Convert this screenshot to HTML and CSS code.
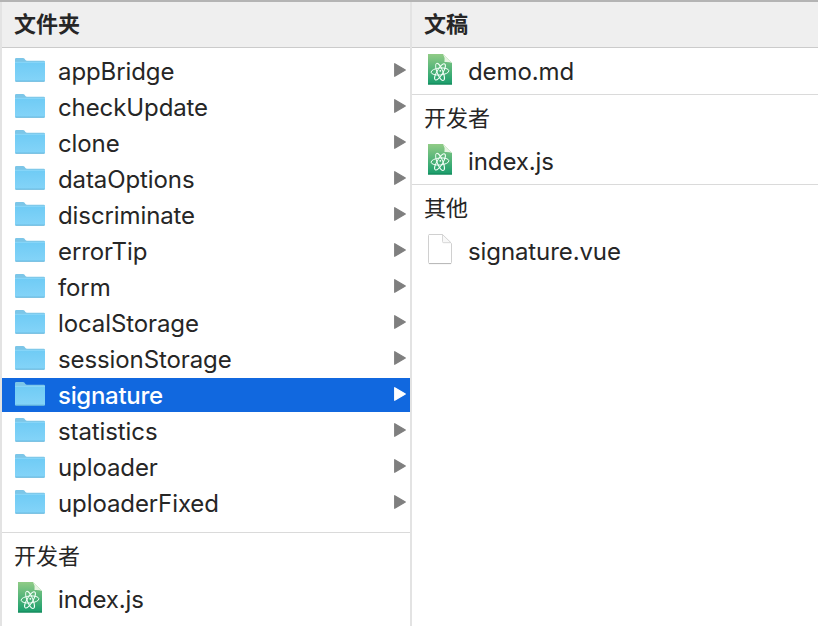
FILE: index.html
```html
<!DOCTYPE html>
<html lang="zh-CN">
<head>
<meta charset="utf-8">
<title>signature</title>
<link rel="stylesheet" href="styles.css">
</head>
<body>
<svg class="defs" aria-hidden="true">
  <defs>
    <linearGradient id="folder-fill" x1="0" y1="0" x2="0" y2="1"><stop offset="0" stop-color="#6fcbf5"/><stop offset="1" stop-color="#84d4f8"/></linearGradient>
    <linearGradient id="atom-fill" x1="0" y1="0" x2="0" y2="1"><stop offset="0" stop-color="#90cb86"/><stop offset="1" stop-color="#179d6c"/></linearGradient>
    <symbol id="folder" viewBox="0 0 32 26">
      <path d="M1 23V2.2Q1 1 2.2 1H9q1 0 1.6.8l.8 1.2q.5.8 1.6.8H29.8Q31 3.8 31 5V23z" fill="#7cc6e8"/>
      <path d="M1 5H31V23.2q0 1.3-1.2 1.3H2.2Q1 24.500 1 23.200z" fill="url(#folder-fill)"/>
      <path d="M1 5.300H31" stroke="#9adcf9" stroke-width=".7"/>
      <path d="M1.400 24.200H30.600" stroke="#62b2d8" stroke-width="1"/>
    </symbol>
    <symbol id="atom" viewBox="0 0 26 32">
      <path d="M1 1H16L25 10V31.500H1z" fill="url(#atom-fill)"/>
      <path d="M1 31H25" stroke="#168459"/>
      <path d="M16 1L25 10Q22 8.600 17.500 9Q18 4 16 1z" fill="#e6f3e1"/>
      <g fill="none" stroke="#f3fff8" stroke-width=".95">
        <ellipse cx="13" cy="18.500" rx="8.900" ry="3.500" transform="rotate(-5 13 18.500)"/>
        <ellipse cx="13" cy="18.900" rx="9.200" ry="2.900" transform="rotate(-59 13 18.900)"/>
        <ellipse cx="13" cy="18.900" rx="9.200" ry="2.900" transform="rotate(68 13 18.900)"/>
      </g>
      <circle cx="13.300" cy="17.800" r=".9" fill="#fff"/>
    </symbol>
    <symbol id="blank" viewBox="0 0 26 32">
      <path d="M2 1.500H15.500L24.500 10.500V29.500q0 1-1 1H2.500q-1 0-1-1V2.500q0-1 1-1z" fill="#fff" stroke="#d0d0d0"/>
      <path d="M15.500 1.500V8.500q0 1.200 1.200 1.200H24z" fill="#f8f8f8" stroke="#d3d3d3" stroke-width=".9"/>
      <path d="M2 30.600H24" stroke="#b8b8b8"/>
    </symbol>
    <symbol id="arrow" viewBox="0 0 12 14">
      <path d="M.7.700L11.300 7L.7 13.300z" fill="currentColor" stroke="currentColor" stroke-width="1.200" stroke-linejoin="round"/>
    </symbol>
  </defs>
</svg>
<main class="browser">
  <section class="column column-left">
    <h2 class="header">文件夹</h2>
    <ul class="list">
      <li class="row"><svg class="folder"><use href="#folder"/></svg><span class="name">appBridge</span><svg class="arrow"><use href="#arrow"/></svg></li>
      <li class="row"><svg class="folder"><use href="#folder"/></svg><span class="name">checkUpdate</span><svg class="arrow"><use href="#arrow"/></svg></li>
      <li class="row"><svg class="folder"><use href="#folder"/></svg><span class="name">clone</span><svg class="arrow"><use href="#arrow"/></svg></li>
      <li class="row"><svg class="folder"><use href="#folder"/></svg><span class="name">dataOptions</span><svg class="arrow"><use href="#arrow"/></svg></li>
      <li class="row"><svg class="folder"><use href="#folder"/></svg><span class="name">discriminate</span><svg class="arrow"><use href="#arrow"/></svg></li>
      <li class="row"><svg class="folder"><use href="#folder"/></svg><span class="name">errorTip</span><svg class="arrow"><use href="#arrow"/></svg></li>
      <li class="row"><svg class="folder"><use href="#folder"/></svg><span class="name">form</span><svg class="arrow"><use href="#arrow"/></svg></li>
      <li class="row"><svg class="folder"><use href="#folder"/></svg><span class="name">localStorage</span><svg class="arrow"><use href="#arrow"/></svg></li>
      <li class="row"><svg class="folder"><use href="#folder"/></svg><span class="name">sessionStorage</span><svg class="arrow"><use href="#arrow"/></svg></li>
      <li class="row selected"><svg class="folder"><use href="#folder"/></svg><span class="name">signature</span><svg class="arrow"><use href="#arrow"/></svg></li>
      <li class="row"><svg class="folder"><use href="#folder"/></svg><span class="name">statistics</span><svg class="arrow"><use href="#arrow"/></svg></li>
      <li class="row"><svg class="folder"><use href="#folder"/></svg><span class="name">uploader</span><svg class="arrow"><use href="#arrow"/></svg></li>
      <li class="row"><svg class="folder"><use href="#folder"/></svg><span class="name">uploaderFixed</span><svg class="arrow"><use href="#arrow"/></svg></li>
    </ul>
    <h3 class="label">开发者</h3>
    <ul class="list sub">
      <li class="row"><svg class="file"><use href="#atom"/></svg><span class="name">index.js</span></li>
    </ul>
  </section>
  <section class="column column-right">
    <h2 class="header">文稿</h2>
    <ul class="list">
      <li class="row"><svg class="file"><use href="#atom"/></svg><span class="name">demo.md</span></li>
    </ul>
    <h3 class="label">开发者</h3>
    <ul class="list sub">
      <li class="row"><svg class="file"><use href="#atom"/></svg><span class="name">index.js</span></li>
    </ul>
    <h3 class="label">其他</h3>
    <ul class="list sub">
      <li class="row"><svg class="file"><use href="#blank"/></svg><span class="name">signature.vue</span></li>
    </ul>
  </section>
</main>
</body>
</html>
```
FILE: styles.css
```css
* { box-sizing: border-box; }

body {
  margin: 0;
  background: #fff;
  color: #262626;
  font-family: Inter, "Noto Sans CJK SC", sans-serif;
  overflow: hidden;
}

.defs { display: block; width: 0; height: 0; }

.browser {
  display: grid;
  grid-template-columns: 410px 1fr;
  height: 626px;
  border-top: 2px solid #b4b4b4;
}

.column { border-left: 2px solid #e3e3e3; overflow: hidden; }

.header {
  height: 46px;
  margin: 0;
  padding-left: 12px;
  border-bottom: 1px solid #cbcbcb;
  background: #efefef;
  font-size: 22px;
  font-weight: 700;
  line-height: 44px;
}

.list { margin: 0; padding: 6px 0 0; list-style: none; }
.list.sub { padding-top: 0; }

.row {
  display: flex;
  align-items: center;
  height: 34px;
  margin-bottom: 2px;
  padding: 0 4px 0 12px;
  font-size: 24px;
  letter-spacing: -0.1px;
  line-height: 34px;
}

.folder { flex: none; width: 32px; height: 26px; margin: -2px 12px 0 0; }
.file { flex: none; width: 26px; height: 32px; margin: -4px 15px 0 3px; }
.name { flex: 1; padding-top: 1px; white-space: nowrap; }
.arrow { flex: none; width: 12px; height: 14px; margin-top: -2px; color: #7f7f7f; }

.selected { background: #1168df; color: #fff; font-weight: 500; letter-spacing: -0.3px; }
.selected .arrow { color: #fff; }

.label {
  height: 50px;
  margin: 6px 0 0;
  padding-left: 12px;
  border-top: 1px solid #dadada;
  font-size: 22px;
  font-weight: 400;
  line-height: 46px;
}

.column-left .label { margin-top: 12px; }
```
